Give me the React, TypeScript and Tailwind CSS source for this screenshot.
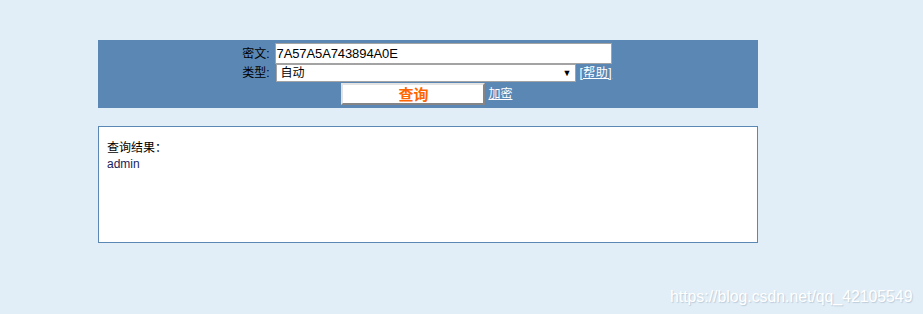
import React from "react";

const cjk = { fontFamily: '"Liberation Sans", "Noto Sans CJK SC", sans-serif' };

export default function App() {
  return (
    <div
      className="min-h-[314px] w-full bg-[#e1eef7] pt-[40px] pl-[98px] relative overflow-hidden"
      style={cjk}
    >
      <div className="w-[660px] h-[68px] bg-[#5b87b4] pt-[3px] flex flex-col items-center">
        <div className="flex flex-col w-[372px] ml-[-3px]">
          <div className="flex items-center h-[21px]">
            <span className="w-[33px] text-right text-[12px] text-black leading-none pr-[4px] whitespace-nowrap">密文:</span>
            <div className="ml-[1px] w-[337px] h-[21px] bg-white border border-[#a3a3a3] flex items-center px-[1px] text-[13px] tracking-[-0.1px] text-black leading-none">
              7A57A5A743894A0E
            </div>
          </div>
          <div className="flex items-center h-[18px]">
            <span className="w-[33px] text-right text-[12px] text-black leading-none pr-[4px] whitespace-nowrap">类型:</span>
            <div className="ml-[2px] w-[300px] h-[18px] bg-white border border-[#a3a3a3] flex items-center justify-between pl-[4px] pr-[3px] text-[12px] text-black leading-none">
              <span>自动</span>
              <span className="text-[9px]">▼</span>
            </div>
            <span className="ml-[4px] text-[12px] text-white underline leading-none tracking-[0.5px]">[帮助]</span>
          </div>
        </div>
        <div className="flex items-center mt-[1px] ml-[-2px]">
          <div className="w-[144px] h-[22px] bg-white border-2 border-t-[#e3e3e3] border-l-[#e3e3e3] border-b-[#858585] border-r-[#858585] flex items-center justify-center text-[15px] font-bold text-[#ff6600] leading-none">
            查询
          </div>
          <span className="ml-[3px] text-[12px] text-white underline leading-none">加密</span>
        </div>
      </div>

      <div className="mt-[18px] w-[660px] h-[117px] bg-white border border-[#5b87b4] pt-[13px] pl-[8px] text-[12px] leading-[16px]">
        <div className="text-black">查询结果：</div>
        <div className="text-[#1c1c5a]">admin</div>
      </div>

      <div
        className="absolute left-[670px] top-[285px] text-[15.8px] text-white"
        style={{ textShadow: "1px 1px 1px rgba(120,140,160,0.35)" }}
      >
        https://blog.csdn.net/qq_42105549
      </div>
    </div>
  );
}
